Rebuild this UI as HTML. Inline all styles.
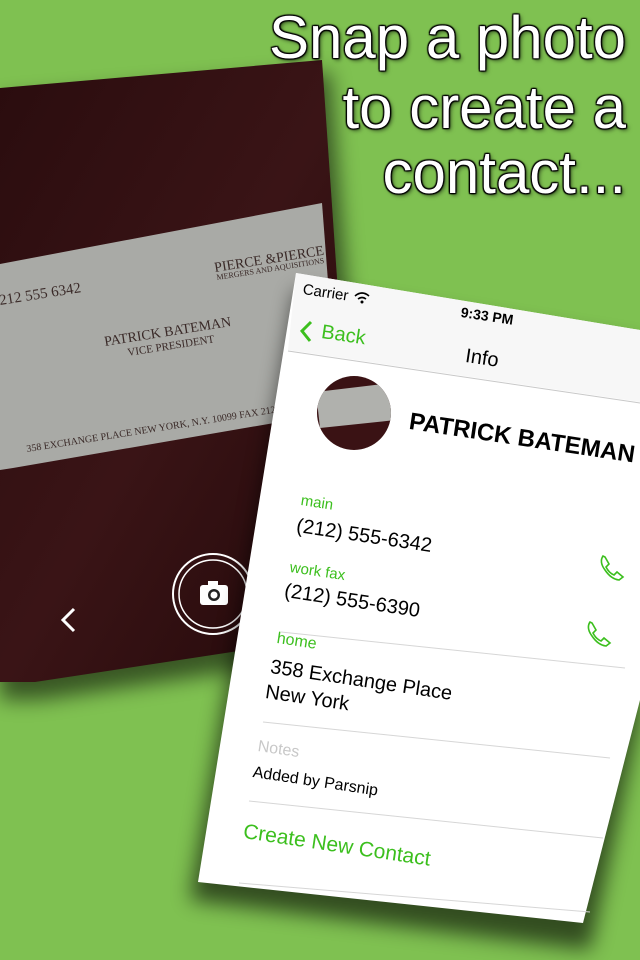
<!DOCTYPE html>
<html><head><meta charset="utf-8"><style>
html,body{margin:0;padding:0}
body{width:640px;height:960px;overflow:hidden;background:#7fc151;position:relative;font-family:"Liberation Sans",sans-serif}
.t{position:absolute;white-space:nowrap;transform:rotate(8.5deg);transform-origin:0 0;line-height:1}
.h{position:absolute;right:14px;color:#fff;font-size:60px;text-align:right;text-shadow:0 0 2px #000,0 0 2px #000,1px 1px 1px #000,-1px -1px 1px #000,1px -1px 1px #000,-1px 1px 1px #000,2px 2px 4px rgba(0,0,0,.6);line-height:1}
.g{color:#3cbf1e}
</style></head><body>
<svg width="640" height="960" style="position:absolute;left:0;top:0">
<defs>
<filter id="sh" x="-20%" y="-20%" width="140%" height="140%"><feGaussianBlur stdDeviation="10"/></filter>
<linearGradient id="wood" x1="0" y1="0" x2="1" y2="1"><stop offset="0" stop-color="#2a0c0e"/><stop offset="0.5" stop-color="#3a1416"/><stop offset="1" stop-color="#220809"/></linearGradient>
<clipPath id="av"><circle cx="354" cy="413" r="37"/></clipPath>
</defs>
<polygon points="0,100 330,72 368,560 255,668 40,700 0,700" fill="#000" opacity=".55" filter="url(#sh)"/>
<polygon points="0,88 322,60 355,540 245,650 35,682 0,682" fill="url(#wood)"/>
<polygon points="0,264 322,203 338,412 13,468 0,470" fill="#a9aaa6"/>
<g fill="#3a2a28" font-family="Liberation Serif,serif">
<text x="215" y="272" font-size="14" transform="rotate(-9 215 272)">PIERCE &amp;PIERCE</text>
<text x="217" y="280" font-size="8" transform="rotate(-9 217 280)">MERGERS AND AQUISITIONS</text>
<text x="0" y="305" font-size="15" transform="rotate(-9 0 305)">212 555 6342</text>
<text x="105" y="346" font-size="14" transform="rotate(-9 105 346)">PATRICK BATEMAN</text>
<text x="128" y="356" font-size="11" transform="rotate(-9 128 356)">VICE PRESIDENT</text>
<text x="27" y="452" font-size="10" transform="rotate(-9 27 452)">358 EXCHANGE PLACE NEW YORK, N.Y. 10099 FAX 212 555 6390</text>
</g>
<circle cx="213" cy="594" r="40" fill="none" stroke="#fff" stroke-width="2"/>
<circle cx="213" cy="594" r="34" fill="none" stroke="#fff" stroke-width="1.5"/>
<rect x="200" y="585" width="28" height="20" rx="3" fill="#fff"/>
<rect x="208" y="581" width="10" height="6" fill="#fff"/>
<circle cx="214" cy="595" r="6" fill="#222"/><circle cx="214" cy="595" r="3.5" fill="#fff"/>
<polyline points="74,609 63,620 74,631" fill="none" stroke="#fff" stroke-width="3"/>
<polygon points="296,290 640,345 640,715 590,950 190,900" fill="#000" opacity=".6" filter="url(#sh)"/>
<polygon points="296,273 640,330 640,700 583,923 198,882" fill="#fff"/>
<polygon points="296,273 640,330 640,402 288,350" fill="#f7f7f7"/>
<line x1="288" y1="351" x2="640" y2="403" stroke="#c8c8c8"/>
<g clip-path="url(#av)"><rect x="310" y="370" width="90" height="90" fill="#3a1214"/><polygon points="316,392 392,383 396,420 320,428" fill="#b0b1ad"/></g>
<g stroke="#d6d6d6" stroke-width="1">
<line x1="281" y1="632" x2="625" y2="668"/>
<line x1="263" y1="722" x2="610" y2="758"/>
<line x1="249" y1="801" x2="603" y2="838"/>
<line x1="239" y1="883" x2="590" y2="912"/>
</g>
<g fill="none" stroke="#3cbf1e" stroke-width="1.6">
<path d="M603 556 q-4 6 2 14 q6 9 14 10 l4 -3 l-6 -5 l-3 3 q-5 -2 -8 -8 l3 -3 l-4 -7 z"/>
<path d="M590 622 q-4 6 2 14 q6 9 14 10 l4 -3 l-6 -5 l-3 3 q-5 -2 -8 -8 l3 -3 l-4 -7 z"/>
<polyline points="311,322 302,331 310,341" stroke-width="3"/>
</g>
<path d="M355 296 q7 -6 14 0 M358 299 q4 -3 8 0" fill="none" stroke="#000" stroke-width="1.6"/>
<circle cx="362" cy="302" r="1.5" fill="#000"/>
</svg>
<div class="h" style="top:8px">Snap a photo</div>
<div class="h" style="top:78px">to create a</div>
<div class="h" style="top:143px">contact...</div>
<div class="t" style="left:304px;top:282px;font-size:15px">Carrier</div>
<div class="t" style="left:462px;top:305px;font-size:14px;font-weight:bold">9:33 PM</div>
<div class="t g" style="left:323px;top:322px;font-size:20px">Back</div>
<div class="t" style="left:467px;top:346px;font-size:20px">Info</div>
<div class="t" style="left:411px;top:410px;font-size:24px;font-weight:bold">PATRICK BATEMAN</div>
<div class="t g" style="left:302px;top:493px;font-size:15px">main</div>
<div class="t" style="left:298px;top:516px;font-size:20px">(212) 555-6342</div>
<div class="t g" style="left:291px;top:560px;font-size:15px">work fax</div>
<div class="t" style="left:286px;top:581px;font-size:20px">(212) 555-6390</div>
<div class="t g" style="left:278px;top:631px;font-size:16px">home</div>
<div class="t" style="left:272px;top:657px;font-size:20px">358 Exchange Place</div>
<div class="t" style="left:267px;top:682px;font-size:20px">New York</div>
<div class="t" style="left:259px;top:739px;font-size:16px;color:#c8c8c8">Notes</div>
<div class="t" style="left:254px;top:765px;font-size:16px">Added by Parsnip</div>
<div class="t g" style="left:245px;top:821px;font-size:21px">Create New Contact</div>
</body></html>
